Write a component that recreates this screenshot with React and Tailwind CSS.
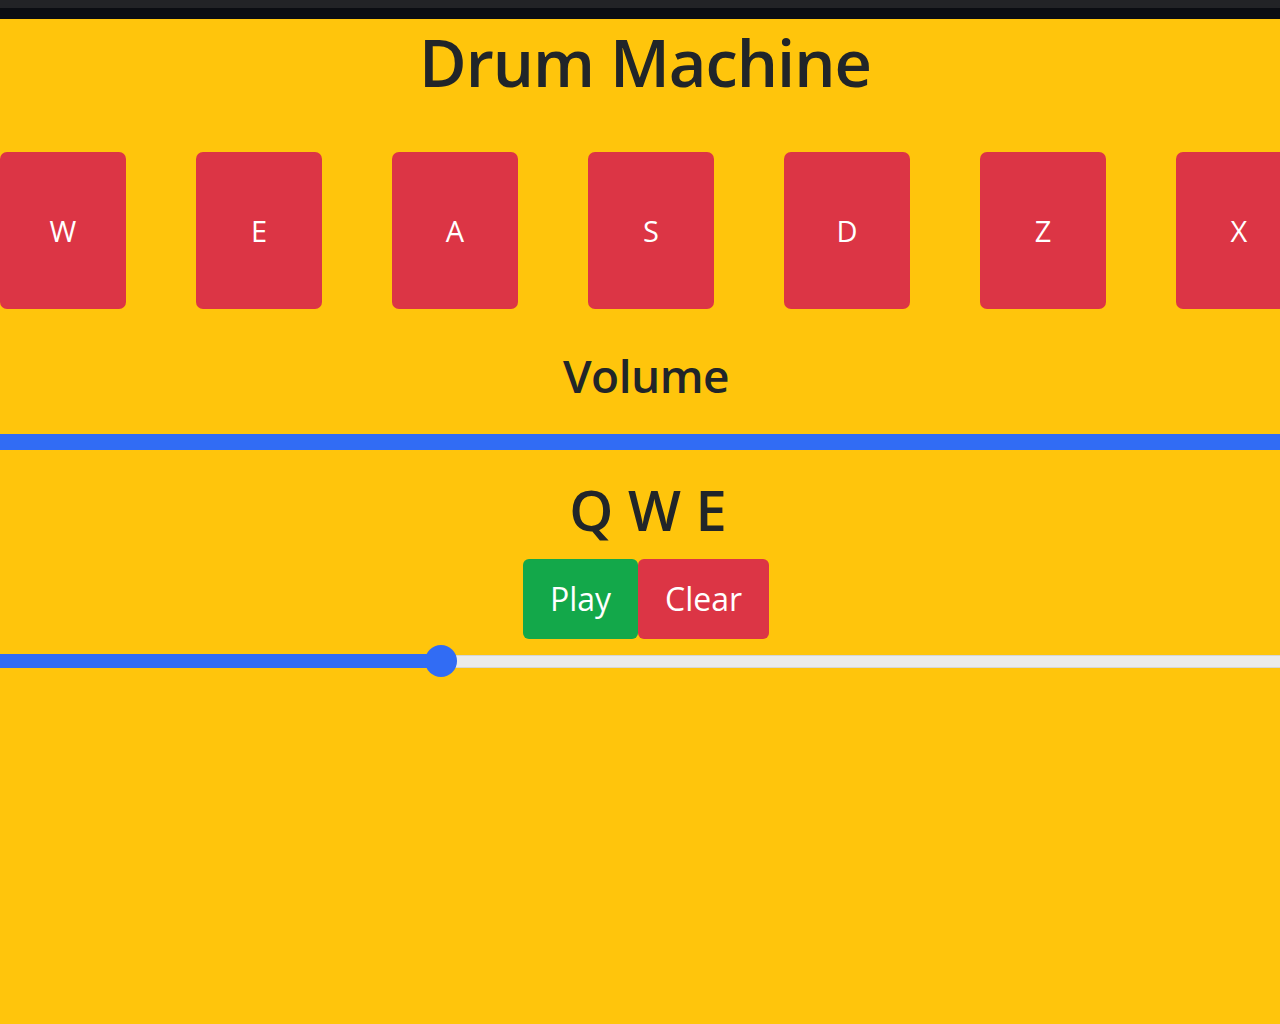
export default function App() {
  const pads = ['W', 'E', 'A', 'S', 'D', 'Z', 'X'];

  return (
    <div className="w-[1280px] h-[1024px] overflow-hidden bg-[#ffc50c] font-['Open_Sans',sans-serif] text-[#212529]">
      {/* browser chrome strip */}
      <div className="h-[8px] bg-[#222326]" />
      <div className="h-[11px] bg-[#0b0d12]" />

      <h1 className="text-center text-[65px] leading-none mt-[11px] font-semibold tracking-[-1px] pl-[10px]">Drum Machine</h1>

      <div className="flex gap-[70px] mt-[57px]">
        {pads.map((k) => (
          <div
            key={k}
            className="shrink-0 w-[126px] h-[157px] rounded-[7px] bg-[#dc3545] flex items-center justify-center text-white text-[29px] font-medium"
          >
            {k}
          </div>
        ))}
      </div>

      <div className="text-center text-[46px] leading-none mt-[43px] font-semibold tracking-[-0.5px] pl-[12px]">Volume</div>

      <div className="h-[16px] bg-[#316cf4] mt-[36px]" />

      <div className="text-center text-[56px] leading-none mt-[31px] font-semibold pl-[16px]">Q W E</div>

      <div className="flex justify-center mt-[22px] ml-[12px]">
        <button className="w-[115px] h-[80px] rounded-[6px] bg-[#13a84a] text-white text-[32px]">Play</button>
        <button className="w-[131px] h-[80px] rounded-[6px] bg-[#dc3545] text-white text-[32px]">Clear</button>
      </div>

      {/* progress slider */}
      <div className="relative h-[34px] mt-[5px] flex items-center">
        <div className="h-[14px] w-[441px] bg-[#316cf4]" />
        <div className="h-[13px] flex-1 bg-[#ebebeb] border-y border-[#d6d6d6]" />
        <div className="absolute left-[425px] top-[1px] w-[32px] h-[32px] rounded-full bg-[#316cf4]" />
      </div>
    </div>
  );
}
